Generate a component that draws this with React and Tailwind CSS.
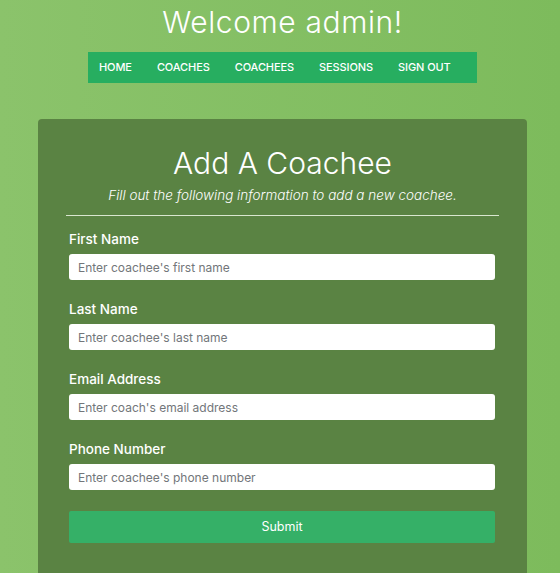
import React from 'react';

const fields = [
  { label: 'First Name', placeholder: "Enter coachee's first name", type: 'text' },
  { label: 'Last Name', placeholder: "Enter coachee's last name", type: 'text' },
  { label: 'Email Address', placeholder: "Enter coach's email address", type: 'email' },
  { label: 'Phone Number', placeholder: "Enter coachee's phone number", type: 'tel' },
];

const links = ['HOME', 'COACHES', 'COACHEES', 'SESSIONS', 'SIGN OUT'];

export default function App() {
  return (
    <div
      className="min-h-screen w-full overflow-hidden bg-gradient-to-r from-[#8bc36b] to-[#7dbb5c] flex flex-col items-center pl-[5px] text-white"
      style={{ fontFamily: 'Inter, "Open Sans", sans-serif' }}
    >
      {/* Titulo */}
      <h1 className="mt-[4px] text-[30px] leading-[36px] font-light tracking-[0.6px]">Welcome admin!</h1>

      {/* Navegacao */}
      <nav className="mt-[12px] w-[389px] h-[31px] bg-[#27ae60] flex items-center pl-[11px] gap-[25px]">
        {links.map((l) => (
          <a key={l} href="#" className="whitespace-nowrap text-[11px] font-medium tracking-[-0.1px] leading-none">
            {l}
          </a>
        ))}
      </nav>

      {/* Card do formulario */}
      <div className="mt-[36px] w-[489px] rounded-[4px] bg-[#5a8343] px-[28px] pt-[26px] pb-[40px]">
        <h2 className="text-center text-[30px] leading-[36px] font-light">Add A Coachee</h2>
        <p className="mt-[4px] text-center text-[13.5px] leading-[20px] italic font-light">
          Fill out the following information to add a new coachee.
        </p>
        <hr className="mt-[10px] border-0 h-px bg-[#d9e6cf]" />

        <form className="pl-[3px] pr-[4px] pt-[13px]" onSubmit={(e) => e.preventDefault()}>
          {fields.map((f) => (
            <div key={f.label} className="mb-[19px]">
              <label className="block text-[13.5px] font-medium leading-[20px] mb-[5px]">{f.label}</label>
              <input
                type={f.type}
                placeholder={f.placeholder}
                className="block w-full h-[26px] rounded-[3px] bg-white px-[9px] text-[12px] text-gray-700 placeholder:text-[#72767a] outline-none"
              />
            </div>
          ))}
          <button
            type="submit"
            className="mt-[2px] w-full h-[32px] rounded-[2px] bg-[#35b067] text-[12.5px] font-normal"
          >
            Submit
          </button>
        </form>
      </div>
    </div>
  );
}
